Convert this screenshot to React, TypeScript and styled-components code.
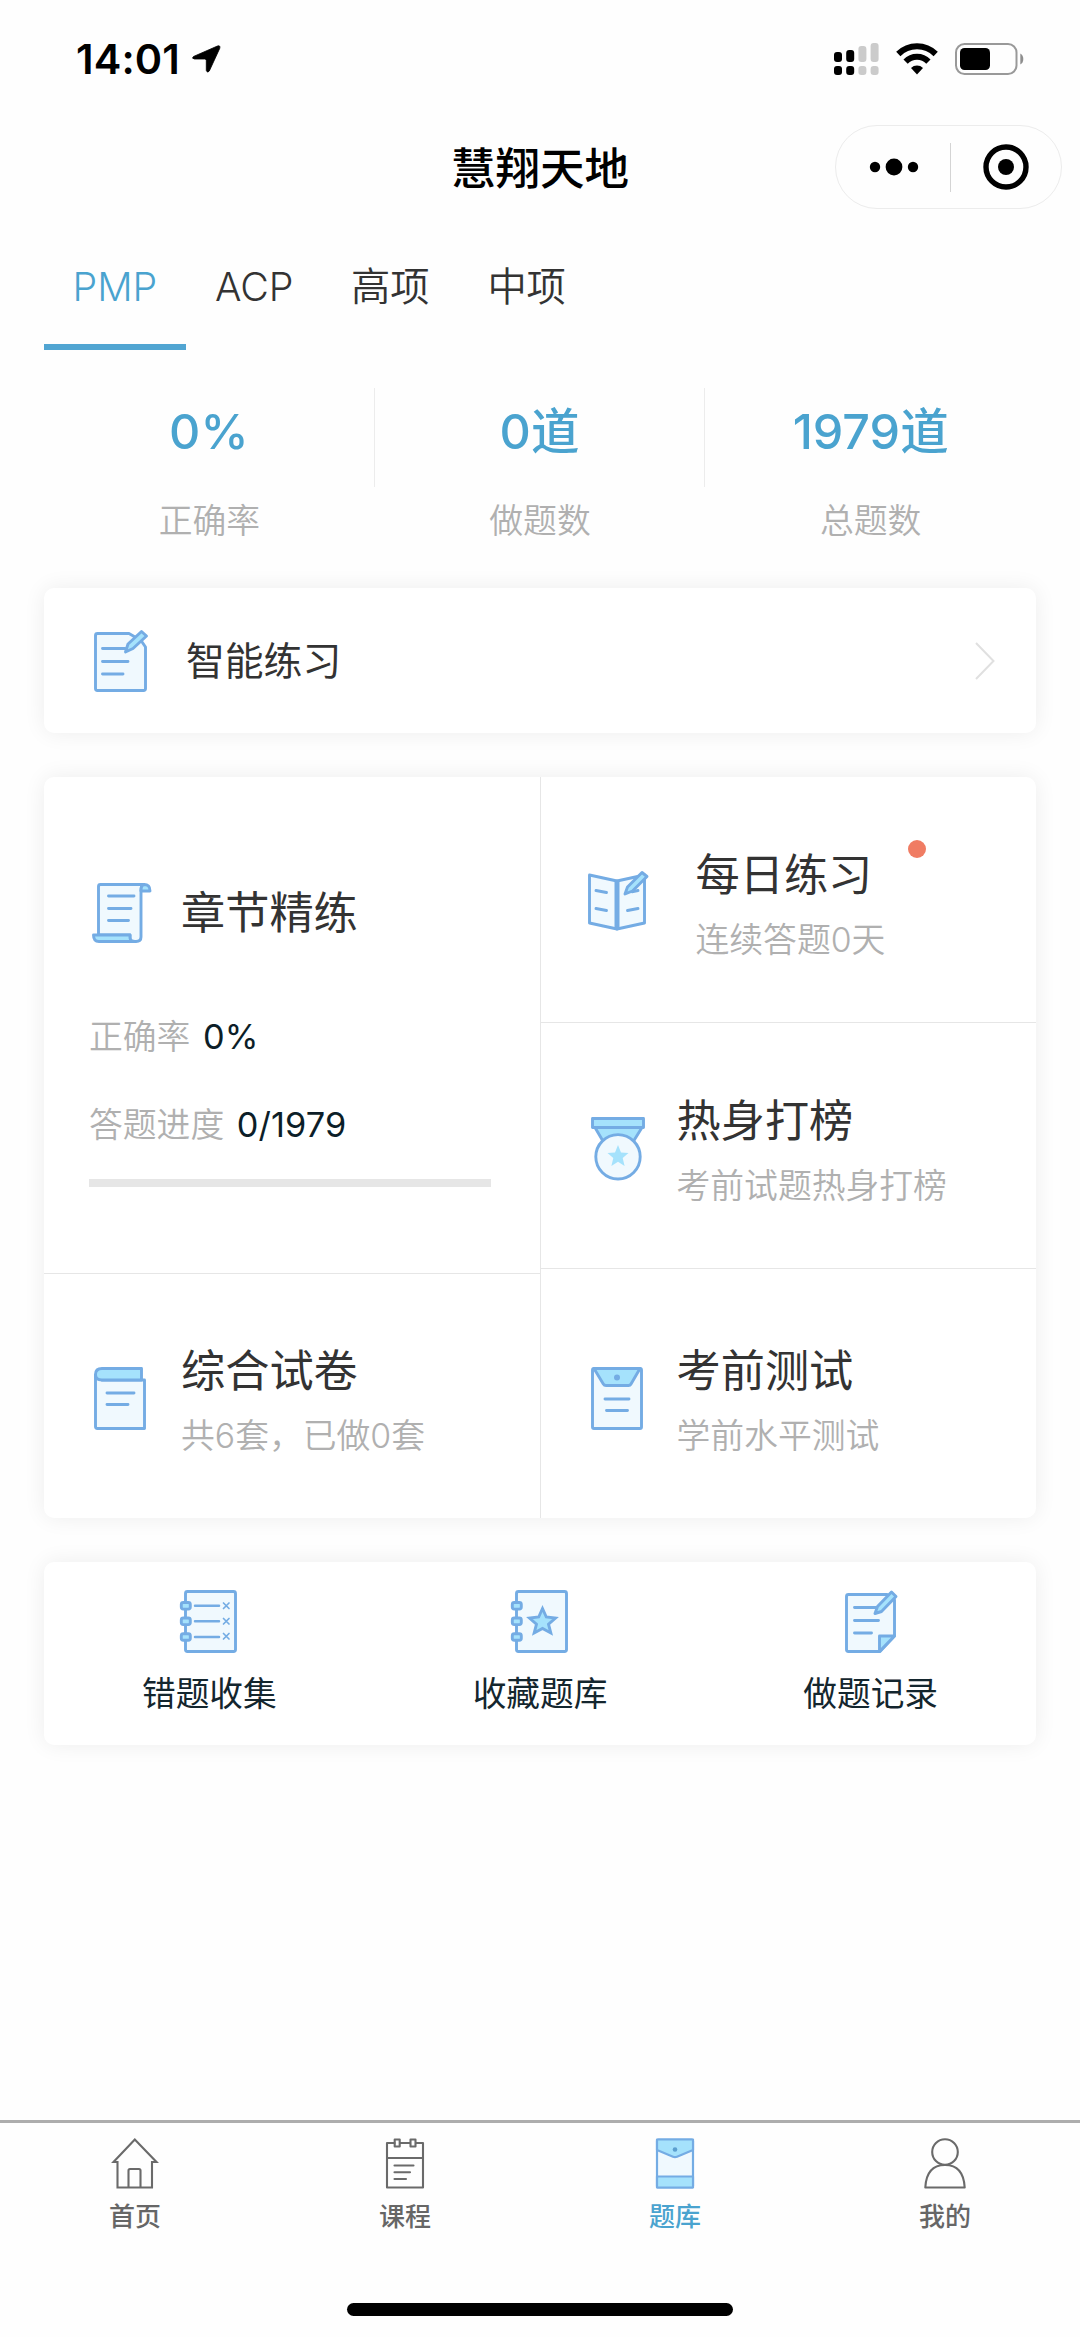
import React from 'react';
import styled, { createGlobalStyle } from 'styled-components';

const BLUE = '#4aa3cf';
const LINE = '#74ace4';
const PALE = '#f0f9fe';
const SKY = '#a5e2fc';
const GREY = '#b0b0b0';

const Global = createGlobalStyle`
  * { box-sizing: border-box; }
  body { margin: 0; background: #fefefe; }
`;

const Page = styled.div`
  display: flex;
  flex-direction: column;
  width: 1080px;
  height: 2337px;
  background: #fefefe;
  color: #333;
  font-family: Inter, 'Noto Sans CJK SC', sans-serif;
  overflow: hidden;
  svg { display: block; flex: none; overflow: visible; }
`;

const StatusBar = styled.header`
  display: flex;
  align-items: center;
  justify-content: space-between;
  height: 118px;
  padding: 0 56px 0 76px;
`;

const Clock = styled.div`
  display: flex;
  align-items: center;
  gap: 12px;
  font-size: 41.5px;
  font-weight: 600;
  line-height: 50px;
  letter-spacing: 0.1px;
  color: #000;
`;

const Indicators = styled.div`
  display: flex;
  align-items: center;
  gap: 17px;
`;

const NavBar = styled.nav`
  display: grid;
  grid-template-columns: 1fr auto 1fr;
  align-items: center;
  height: 98px;
  padding-right: 18px;
  padding-left: 18px;
`;

const NavTitle = styled.h1`
  grid-column: 2;
  margin: 0;
  padding-top: 4px;
  font-size: 44.5px;
  font-weight: 500;
  line-height: 60px;
  color: #000;
`;

const Capsule = styled.div`
  display: flex;
  align-items: center;
  justify-self: end;
  width: 227px;
  height: 84px;
  border: 1.5px solid #ececec;
  border-radius: 42px;
`;

const CapsuleHalf = styled.div`
  display: flex;
  flex: 1;
  align-items: center;
  justify-content: center;
  height: 49px;
  padding-left: 3px;
  & + & { border-left: 1.5px solid #d4d4d4; padding-left: 0; }
`;

const Tabs = styled.div`
  display: flex;
  height: 134px;
  padding-left: 44px;
`;

const Tab = styled.div<{ $active?: boolean }>`
  padding: 51px 29.3px 0 28.6px;
  border-bottom: 6px solid ${(p) => (p.$active ? '#51a5d2' : 'transparent')};
  color: ${(p) => (p.$active ? BLUE : '#333')};
  font-size: 39.3px;
  font-weight: 350;
  line-height: 40px;
  letter-spacing: -0.1px;
`;

const Stats = styled.section`
  display: grid;
  grid-template-columns: repeat(3, 1fr);
  margin: 38px 44px 47px;
`;

const Stat = styled.div`
  text-align: center;
  &:not(:last-child) > :first-child { border-right: 1px solid #ececec; }
`;

const StatValue = styled.div`
  height: 99px;
  padding-top: 14px;
  color: ${BLUE};
  font-size: 48.5px;
  font-weight: 500;
  line-height: 60px;
`;

const StatLabel = styled.div`
  margin-top: 14px;
  color: ${GREY};
  font-size: 33.8px;
  font-weight: 350;
  line-height: 40px;
`;

const Card = styled.section`
  display: flex;
  flex: none;
  margin: 0 44px 44px;
  border-radius: 10px;
  background: #fff;
  box-shadow: 0 0 22px rgba(0, 0, 0, 0.07);
`;

const PracticeCard = styled(Card)`
  align-items: center;
  height: 145px;
  padding: 0 41px 0 50px;
`;

const PracticeTitle = styled.div`
  flex: 1;
  margin-left: 38px;
  font-size: 38.8px;
  font-weight: 400;
  line-height: 50px;
`;

const ModuleCard = styled(Card)`
  height: 741px;
`;

const Column = styled.div`
  display: flex;
  flex: 1;
  flex-direction: column;
  & + & { border-left: 1.5px solid #e6e6e6; }
`;

const Cell = styled.div<{ $h: number; $left: number; $top: number; $gap: number }>`
  display: flex;
  height: ${(p) => p.$h}px;
  padding: ${(p) => p.$top}px 0 0 ${(p) => p.$left}px;
  gap: ${(p) => p.$gap}px;
  & + & { border-top: 1px solid #e6e6e6; }
  svg { margin-top: 27px; }
`;

const Chapter = styled.div`
  height: 496px;
  padding: 106px 49px 0 45px;
  & + ${Cell} { border-top: 1px solid #e6e6e6; }
`;

const ChapterHead = styled.div`
  display: flex;
  align-items: center;
  gap: 29px;
  height: 60px;
  padding-left: 3px;
`;

const CellTitle = styled.div`
  font-size: 44.2px;
  font-weight: 400;
  line-height: 62px;
`;

const CellSub = styled.div`
  margin-top: 14px;
  color: ${GREY};
  font-size: 33.8px;
  font-weight: 350;
  line-height: 40px;
  white-space: nowrap;
`;

const TitleRow = styled.div`
  display: flex;
  gap: 36px;
`;

const Dot = styled.span`
  width: 18px;
  height: 18px;
  margin-top: -4px;
  border-radius: 50%;
  background: #f07c63;
`;

const Metric = styled.div<{ $mt: number }>`
  display: flex;
  gap: 12.5px;
  margin-top: ${(p) => p.$mt}px;
  color: ${GREY};
  font-size: 33.8px;
  font-weight: 350;
  line-height: 40px;
`;

const MetricValue = styled.span`
  color: #0c1e28;
  font-size: 34.3px;
  font-weight: 400;
  letter-spacing: 0.15px;
`;

const Progress = styled.div`
  height: 8px;
  margin-top: 34px;
  background: #e6e6e6;
`;

const ToolCard = styled(Card)`
  height: 183px;
`;

const Tool = styled.div`
  display: flex;
  flex: 1;
  flex-direction: column;
  align-items: center;
  padding-top: 28px;
  color: #14262e;
  font-size: 33.7px;
  font-weight: 400;
  line-height: 40px;
  gap: 21px;
`;

const TabBar = styled.footer`
  display: flex;
  flex-direction: column;
  align-items: center;
  height: 217px;
  margin-top: auto;
  border-top: 3px solid #adadad;
`;

const TabItems = styled.div`
  display: flex;
  align-self: stretch;
  height: 180px;
`;

const TabItem = styled.div<{ $active?: boolean }>`
  display: flex;
  flex: 1;
  flex-direction: column;
  align-items: center;
  padding-top: 15px;
  gap: 13px;
  color: ${(p) => (p.$active ? BLUE : '#666')};
  font-size: 26px;
  font-weight: 500;
  line-height: 30px;
`;

const HomeIndicator = styled.div`
  width: 386px;
  height: 13px;
  border-radius: 7px;
  background: #000;
`;

const Arrow = () => (
  <svg width="29" height="28" viewBox="0 0 29 28">
    <path d="M1.5 11.5 L25.5 1 Q28.5 0 27.8 3.2 L17.3 26 Q15.5 28.5 14.3 25.5 V15.5 Q14.2 14 12.7 14 H2.5 Q-.8 13.5 1.5 11.5Z" fill="#000" stroke="#000" strokeWidth="0.8" />
  </svg>
);

const Signal = () => {
  const tops = [9, 7, 3, 0];
  return (
    <svg width="45" height="32" viewBox="0 0 45 32">
      {tops.map((t, i) => (
        <g key={i} fill={i < 2 ? '#000' : '#cbcbcb'}>
          <rect x={i * 12.2} y={t} width="8" height={19 - t} rx="3" />
          <rect x={i * 12.2} y="23" width="8" height="9" rx="3" />
        </g>
      ))}
    </svg>
  );
};

const Wifi = () => (
  <svg width="42" height="32" viewBox="0 0 42 32">
    <path d="M2.3 11 A26.5 26.5 0 0 1 39.7 11" fill="none" stroke="#000" strokeWidth="6" />
    <path d="M9.6 18.6 A16 16 0 0 1 32.4 18.6" fill="none" stroke="#000" strokeWidth="6" />
    <path d="M21 31.5 L15 25 A8.6 8.6 0 0 1 27 25Z" fill="#000" />
  </svg>
);

const Battery = () => (
  <svg width="69" height="32" viewBox="0 0 69 32">
    <rect x="1" y="1" width="60.5" height="30" rx="8.5" fill="none" stroke="#999" strokeWidth="2" />
    <rect x="5" y="5" width="30" height="22" rx="4.5" fill="#000" />
    <path d="M65.3 10.5 Q68.3 12 68.3 16 T65.3 21.500Z" fill="#8e8e8e" />
  </svg>
);

const Dots = () => (
  <svg width="50" height="18" viewBox="0 0 50 18">
    <circle cx="6" cy="9" r="5.2" />
    <circle cx="25" cy="9" r="8.4" />
    <circle cx="44" cy="9" r="5.2" />
  </svg>
);

const Target = () => (
  <svg width="46" height="46" viewBox="0 0 46 46">
    <circle cx="23" cy="23" r="20" fill="none" stroke="#000" strokeWidth="5.4" />
    <circle cx="23" cy="23" r="8" />
  </svg>
);

const Chevron = () => (
  <svg width="20" height="38" viewBox="0 0 20 38">
    <path d="M1 1 L18.500 19 L1 37" fill="none" stroke="#e0e0e0" strokeWidth="2" />
  </svg>
);

const ink = { fill: 'none', stroke: LINE, strokeWidth: 2.9, strokeLinejoin: 'round', strokeLinecap: 'round' } as const;

const NoteIcon = () => (
  <svg width="54" height="62" viewBox="0 0 54 62">
    <g {...ink}>
      <path d="M35 3.500H3.500Q1.500 3.500 1.500 5.500V58.500Q1.500 60.500 3.500 60.500H49.500Q51.500 60.500 51.500 58.500V17L47 10.500Z" fill={PALE} />
      <path d="M8.500 18.500H31M8.500 31.500H34M8.500 44H29" />
      <path d="M31.500 22L34 14L47.500 1.500L52.500 6L39 18.500Z" fill={SKY} />
    </g>
  </svg>
);

const ScrollIcon = () => (
  <svg width="60" height="60" viewBox="0 0 60 60">
    <g {...ink}>
      <path d="M6.500 52V3.500Q6.500 1.500 8.500 1.500H52Q49 2 49 7V54Q49 58.500 44 58.500H38V52Z" fill={PALE} />
      <path d="M49 8H58Q58 1.500 52 1.500Q49 2 49 8Z" fill={SKY} />
      <path d="M1.500 52H38V55Q38.500 58.500 43 58.500H7Q1.500 58.500 1.500 52Z" fill={SKY} />
      <path d="M16.500 13H42M16.500 25.500H39M16.500 37.500H36.500" />
    </g>
  </svg>
);

const BookIcon = () => (
  <svg width="60" height="60" viewBox="0 0 60 60">
    <g {...ink}>
      <path d="M1.500 4L29 10V58L1.500 52Z" fill={PALE} />
      <path d="M29 10L56.500 4V52L29 58Z" fill={PALE} />
      <path d="M29 10V57.500" strokeWidth="5" strokeLinecap="butt" />
      <path d="M8 19.500L18.500 21.500M8 37.500L18.500 39.500M39.500 39.500L50 37.500M44 20.800L50 19.500" />
      <path d="M37 23L39.500 16L54 1.500L59 5.500L44.500 20Z" fill={SKY} />
    </g>
  </svg>
);

const MedalIcon = () => (
  <svg width="54" height="64" viewBox="0 0 54 64">
    <g {...ink}>
      <path d="M4 10.500L12.500 25H42L51 10.500Z" fill={SKY} />
      <path d="M1.500 1.500H52.500V10.500H1.500Z" fill={SKY} />
      <circle cx="27" cy="39.800" r="22.200" fill={PALE} />
    </g>
    <path d="M27 28L30 35.500L37.500 36L31.700 41L33.600 49L27 44.700L20.400 49L22.300 41L16.500 36L24 35.500Z" fill={SKY} />
  </svg>
);

const PaperIcon = () => (
  <svg width="52" height="63" viewBox="0 0 52 63">
    <g {...ink}>
      <path d="M1.500 8V59.500Q1.500 61.500 3.500 61.500H50.500V13H8Z" fill={PALE} />
      <path d="M8 1.500H47.500V13H8Q1.500 13 1.500 7.500Q1.500 1.500 8 1.500Z" fill={SKY} />
      <path d="M13 26H40M13 37.500H34" />
    </g>
  </svg>
);

const EnvelopeIcon = () => (
  <svg width="52" height="63" viewBox="0 0 52 63">
    <g {...ink}>
      <rect x="1.500" y="1.500" width="49" height="60" rx="1.500" fill={PALE} />
      <path d="M3 1.500H49L40 17Q39.200 18.500 37.500 18.500H15Q13.200 18.500 12.300 17Z" fill={SKY} />
      <path d="M14 32H38M15.500 43.500H36.500" />
    </g>
    <circle cx="26" cy="10.500" r="3" fill={LINE} />
  </svg>
);

const rings = [12.5, 28, 43.700].map((y) => (
  <rect key={y} x="1.300" y={y} width="9" height="6.600" rx="2" fill={SKY} />
));

const WrongIcon = () => (
  <svg width="58" height="63" viewBox="0 0 58 63">
    <g {...ink}>
      <rect x="5.500" y="1.500" width="50" height="60" rx="2" fill={PALE} />
      {rings}
      <path d="M15 15.800H39M15 31.300H39M15 47H39" strokeWidth="2.500" />
      <path d="M43.500 13l5.500 5.500m0-5.500l-5.500 5.500M43.500 28.500l5.500 5.500m0-5.500l-5.500 5.500M43.500 43.500l5.500 5.500m0-5.500l-5.500 5.500" strokeWidth="1.700" />
    </g>
  </svg>
);

const FavoriteIcon = () => (
  <svg width="58" height="63" viewBox="0 0 58 63">
    <g {...ink}>
      <rect x="5.500" y="1.500" width="50" height="60" rx="2" fill={PALE} />
      {rings}
      <path strokeLinejoin="miter" d="M31.500 18.500L35.300 27L44.500 28L37.500 34.200L39.800 43L31.500 38.500L23.200 43L25.500 34.200L18.500 28L27.700 27Z" fill={SKY} />
    </g>
  </svg>
);

const RecordIcon = () => (
  <svg width="52" height="63" viewBox="0 0 52 63">
    <g {...ink}>
      <path d="M3.500 4.500H42L49.500 10V46L35 61.500H3.500Q1.500 61.500 1.500 59.500V6.500Q1.500 4.500 3.500 4.500Z" fill={PALE} />
      <path d="M34.500 46H49.500L34.500 61.500Z" fill={SKY} />
      <path d="M9.500 17.500H31M9.500 30.500H33.500M9.500 43H26.500" />
      <path d="M30 23.500L32.500 16.500L46.500 2L51 6.500L36.500 21.500Z" fill={SKY} />
    </g>
  </svg>
);

const line = { fill: 'none', stroke: '#6a6a6a', strokeWidth: 2.1, strokeLinejoin: 'round', strokeLinecap: 'round' } as const;

const HomeIcon = () => (
  <svg width="46" height="51" viewBox="0 0 46 51">
    <g {...line}>
      <path d="M5.500 24H1.500L22.800 1.500L44.500 24H40V49.500H5.500Z" strokeLinejoin="miter" />
      <path d="M16.500 49V32.500Q16.500 31 18 31H27Q28.500 31 28.500 32.500V49" />
    </g>
  </svg>
);

const CourseIcon = () => (
  <svg width="38" height="51" viewBox="0 0 38 51">
    <g {...line}>
      <path d="M8.500 5H1V49.500H37V5H30M24 5H14M1 20H37" />
      <rect x="8.700" y="1.500" width="5" height="7" />
      <rect x="24.500" y="1.500" width="5" height="7" />
      <path d="M8.500 27.500H27.500M8.500 34.300H24M8.500 41H20" />
    </g>
  </svg>
);

const BankIcon = () => (
  <svg width="38" height="51" viewBox="0 0 38 51">
    <g {...ink} strokeWidth="2.200">
      <rect x="1" y="1.500" width="36" height="48" rx="1.500" fill={PALE} />
      <path d="M1 1.500H37V12L21 18.700Q19 19.500 17 18.700L1 12Z" fill={SKY} />
      <path d="M1 38.500H37V49.500H1Z" fill={SKY} />
    </g>
    <circle cx="19" cy="11.500" r="2.300" fill="#5b9fd0" />
  </svg>
);

const MineIcon = () => (
  <svg width="42" height="51" viewBox="0 0 42 51">
    <g {...line}>
      <circle cx="21" cy="14" r="12.800" />
      <path d="M1.300 49.500Q2.500 27 21 27Q39.500 27 40.700 49.500Z" />
    </g>
  </svg>
);

const tabs = ['PMP', 'ACP', '高项', '中项'];
const stats = [
  ['0%', '正确率'],
  ['0道', '做题数'],
  ['1979道', '总题数'],
];

export default function App() {
  return (
    <>
      <Global />
      <Page>
        <StatusBar>
          <Clock>14:01<Arrow /></Clock>
          <Indicators><Signal /><Wifi /><Battery /></Indicators>
        </StatusBar>
        <NavBar>
          <NavTitle>慧翔天地</NavTitle>
          <Capsule>
            <CapsuleHalf><Dots /></CapsuleHalf>
            <CapsuleHalf><Target /></CapsuleHalf>
          </Capsule>
        </NavBar>
        <Tabs>
          {tabs.map((t, i) => <Tab key={t} $active={i === 0}>{t}</Tab>)}
        </Tabs>
        <Stats>
          {stats.map(([v, l]) => (
            <Stat key={l}><StatValue>{v}</StatValue><StatLabel>{l}</StatLabel></Stat>
          ))}
        </Stats>
        <PracticeCard>
          <NoteIcon />
          <PracticeTitle>智能练习</PracticeTitle>
          <Chevron />
        </PracticeCard>
        <ModuleCard>
          <Column>
            <Chapter>
              <ChapterHead><ScrollIcon /><CellTitle>章节精练</CellTitle></ChapterHead>
              <Metric $mt={74}>正确率<MetricValue>0%</MetricValue></Metric>
              <Metric $mt={48}>答题进度<MetricValue>0/1979</MetricValue></Metric>
              <Progress />
            </Chapter>
            <Cell $h={245} $left={50} $top={66} $gap={35}>
              <PaperIcon />
              <div><CellTitle>综合试卷</CellTitle><CellSub>共6套，已做0套</CellSub></div>
            </Cell>
          </Column>
          <Column>
            <Cell $h={245} $left={47} $top={67} $gap={48}>
              <BookIcon />
              <div>
                <TitleRow><CellTitle>每日练习</CellTitle><Dot /></TitleRow>
                <CellSub>连续答题0天</CellSub>
              </div>
            </Cell>
            <Cell $h={246} $left={50} $top={67} $gap={32}>
              <MedalIcon />
              <div><CellTitle>热身打榜</CellTitle><CellSub>考前试题热身打榜</CellSub></div>
            </Cell>
            <Cell $h={250} $left={50} $top={71} $gap={34}>
              <EnvelopeIcon />
              <div><CellTitle>考前测试</CellTitle><CellSub>学前水平测试</CellSub></div>
            </Cell>
          </Column>
        </ModuleCard>
        <ToolCard>
          <Tool><WrongIcon />错题收集</Tool>
          <Tool><FavoriteIcon />收藏题库</Tool>
          <Tool><RecordIcon />做题记录</Tool>
        </ToolCard>
        <TabBar>
          <TabItems>
            <TabItem><HomeIcon />首页</TabItem>
            <TabItem><CourseIcon />课程</TabItem>
            <TabItem $active><BankIcon />题库</TabItem>
            <TabItem><MineIcon />我的</TabItem>
          </TabItems>
          <HomeIndicator />
        </TabBar>
      </Page>
    </>
  );
}
